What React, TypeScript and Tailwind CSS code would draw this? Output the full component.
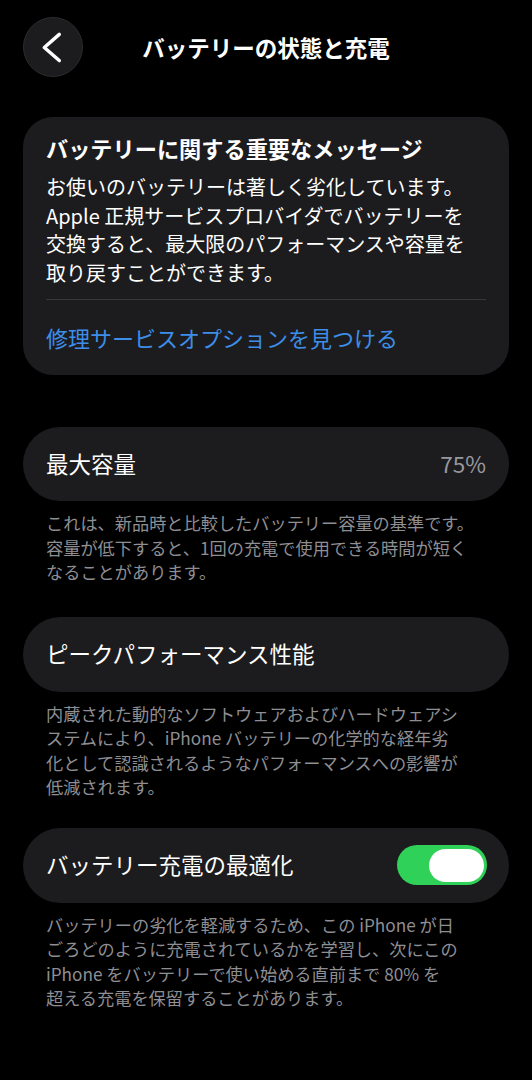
const font = { fontFamily: '"Noto Sans CJK JP", "Noto Sans", sans-serif' }

function Footer({ lines, className = '' }: { lines: string[]; className?: string }) {
  return (
    <p className={`mt-[10px] px-[46px] text-[17.2px] leading-[24.5px] text-[#8e8e93] whitespace-nowrap ${className}`}>
      {lines.map((l, i) => (
        <span key={i} className="block">
          {l}
        </span>
      ))}
    </p>
  )
}

export default function App() {
  return (
    <div className="min-h-[1080px] w-[532px] bg-black text-white" style={font}>
      {/* Header */}
      <div className="grid grid-cols-[60px_1fr_60px] items-center px-[23px] pt-[17px]">
        <button className="flex h-[60px] w-[60px] items-center justify-center rounded-full border border-[#2c2c2e] bg-[#1c1c1e]">
          <svg width="60" height="60" viewBox="0 0 60 60" fill="none">
            <polyline
              points="36.5,17 21,30.5 36.5,44"
              stroke="white"
              strokeWidth="3.6"
              strokeLinecap="round"
              strokeLinejoin="round"
            />
          </svg>
        </button>
        <h1 className="text-center text-[22.5px] font-bold leading-[30px]">バッテリーの状態と充電</h1>
        <div />
      </div>

      <div className="px-[23px]">
        {/* Important message */}
        <div className="mt-[40px] rounded-[30px] bg-[#1c1c1e] px-[23px] pt-[16px]">
          <h2 className="text-[22.2px] font-bold leading-[30px]">バッテリーに関する重要なメッセージ</h2>
          <p className="mt-[10px] whitespace-nowrap text-[20px] leading-[28.5px]">
            <span className="block">お使いのバッテリーは著しく劣化しています。</span>
            <span className="block">Apple 正規サービスプロバイダでバッテリーを</span>
            <span className="block">交換すると、最大限のパフォーマンスや容量を</span>
            <span className="block">取り戻すことができます。</span>
          </p>
          <div className="mt-[12px] h-px bg-[#38383a]" />
          <div className="flex h-[75px] items-center text-[22px] text-[#3c8ee8]">修理サービスオプションを見つける</div>
        </div>

        {/* Max capacity */}
        <div className="mt-[52px] flex h-[74px] items-center justify-between rounded-full bg-[#1c1c1e] px-[23px]">
          <span className="text-[22.5px]">最大容量</span>
          <span className="text-[22.5px] text-[#98989f]">75%</span>
        </div>
      </div>
      <Footer
        lines={[
          'これは、新品時と比較したバッテリー容量の基準です。',
          '容量が低下すると、1回の充電で使用できる時間が短く',
          'なることがあります。',
        ]}
      />

      <div className="px-[23px]">
        <div className="mt-[32px] flex h-[75px] items-center rounded-full bg-[#1c1c1e] px-[23px]">
          <span className="text-[22.5px]">ピークパフォーマンス性能</span>
        </div>
      </div>
      <Footer
        lines={[
          '内蔵された動的なソフトウェアおよびハードウェアシ',
          'ステムにより、iPhone バッテリーの化学的な経年劣',
          '化として認識されるようなパフォーマンスへの影響が',
          '低減されます。',
        ]}
      />

      <div className="px-[23px]">
        <div className="mt-[28px] flex h-[75px] items-center justify-between rounded-full bg-[#1c1c1e] pl-[23px] pr-[22px]">
          <span className="text-[22.5px]">バッテリー充電の最適化</span>
          <div className="flex h-[40px] w-[90px] items-center justify-end rounded-full bg-[#30d158] px-[3px]">
            <div className="h-[33px] w-[55px] rounded-full bg-white" />
          </div>
        </div>
      </div>
      <Footer
        lines={[
          'バッテリーの劣化を軽減するため、この iPhone が日',
          'ごろどのように充電されているかを学習し、次にこの',
          'iPhone をバッテリーで使い始める直前まで 80% を',
          '超える充電を保留することがあります。',
        ]}
      />
    </div>
  )
}
